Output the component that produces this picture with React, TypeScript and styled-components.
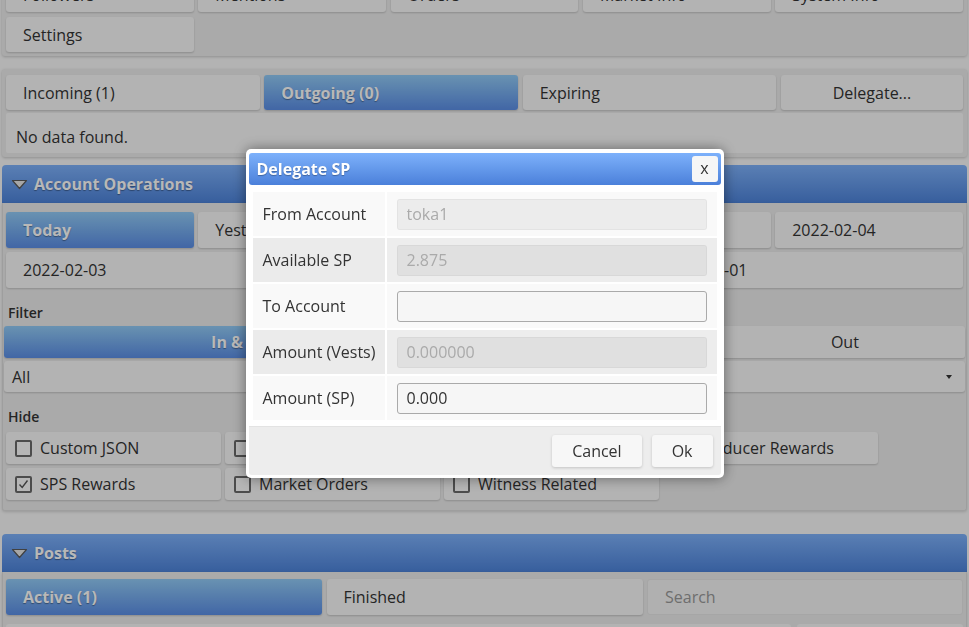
import React from "react";
import styled, { createGlobalStyle, css } from "styled-components";

const GlobalStyle = createGlobalStyle`
  * { box-sizing: border-box; }
  html, body { margin: 0; padding: 0; }
  body {
    background: #f8f8f8;
    font-family: "Open Sans", "Liberation Sans", sans-serif;
    font-size: 16px;
    color: #333;
    overflow: hidden;
  }
`;

/* ---------- page ---------- */

const Page = styled.div`
  margin-top: -27px;
  padding: 0 2px;
  display: flex;
  flex-direction: column;
`;

const Card = styled.section<{ $top?: number; $pad?: string }>`
  margin-top: ${(p) => p.$top ?? 0}px;
  padding: ${(p) => p.$pad ?? "4px"};
  background: #ececec;
  border-radius: 3px;
  box-shadow: 0 1px 3px rgba(0, 0, 0, 0.2);
  display: flex;
  flex-direction: column;
`;

const Grid = styled.div<{ $cols: string; $gap?: string }>`
  display: grid;
  grid-template-columns: ${(p) => p.$cols};
  gap: ${(p) => p.$gap ?? "5px 4.5px"};
`;

const Btn = styled.div<{ $active?: boolean; $center?: boolean; $h?: number }>`
  height: ${(p) => p.$h ?? 35}px;
  display: flex;
  align-items: center;
  justify-content: ${(p) => (p.$center ? "center" : "flex-start")};
  padding: 0 17px;
  background: #f8f8f8;
  border-radius: 3px;
  box-shadow: 0 1px 2px rgba(0, 0, 0, 0.18);
  color: #333;
  white-space: nowrap;
  overflow: hidden;
  ${(p) =>
    p.$active &&
    css`
      background: linear-gradient(#92cbf6, #5b8ee6);
      color: #fff;
      font-weight: 700;
      text-shadow: 0 1px 1px rgba(0, 0, 0, 0.35);
    `}
`;

const EmptyNote = styled.div`
  margin-top: 3px;
  height: 40px;
  padding: 14px 0 0 10px;
  line-height: 20px;
  background: #f9f9f9;
  border-radius: 2px;
`;

const SectionHeader = styled.header<{ $top: number }>`
  margin-top: ${(p) => p.$top}px;
  height: 38px;
  display: flex;
  align-items: center;
  gap: 6px;
  padding-left: 9px;
  border-radius: 4px 4px 0 0;
  background: linear-gradient(#7eb1fa, #4d83da);
  color: #fff;
  font-weight: 700;
  text-shadow: 0 1px 1px rgba(0, 0, 0, 0.35);
`;

const SectionBody = styled.div<{ $pad: string }>`
  padding: ${(p) => p.$pad};
  background: #ececec;
  border: 1px solid #dcdcdc;
  border-top: 0;
  border-radius: 0 0 3px 3px;
  box-shadow: 0 1px 3px rgba(0, 0, 0, 0.15);
  display: flex;
  flex-direction: column;
`;

const FieldLabel = styled.div<{ $top: number }>`
  margin-top: ${(p) => p.$top}px;
  padding-left: 2px;
  font-size: 14px;
  font-weight: 600;
  line-height: 20px;
`;

const Segmented = styled.div`
  margin: 3px -2px 0;
  display: grid;
  grid-template-columns: 2fr 1fr 1fr;
  border-radius: 3px;
  overflow: hidden;
  box-shadow: 0 1px 2px rgba(0, 0, 0, 0.18);
`;

const Segment = styled.div<{ $active?: boolean }>`
  height: 32px;
  display: flex;
  align-items: center;
  justify-content: center;
  background: #f8f8f8;
  ${(p) =>
    p.$active &&
    css`
      background: linear-gradient(#92cbf6, #5b8ee6);
      color: #fff;
      font-weight: 700;
      text-shadow: 0 1px 1px rgba(0, 0, 0, 0.35);
    `}
`;

const SelectBox = styled.div`
  margin: 3px -2px 0;
  height: 31px;
  display: flex;
  align-items: center;
  justify-content: space-between;
  padding: 0 13px 0 8px;
  background: #f8f8f8;
  border-radius: 3px;
  box-shadow: 0 1px 2px rgba(0, 0, 0, 0.18);
`;

const CheckItem = styled.label`
  height: 32px;
  display: flex;
  align-items: center;
  gap: 8px;
  padding-left: 9px;
  background: #f8f8f8;
  border-radius: 3px;
  box-shadow: 0 1px 2px rgba(0, 0, 0, 0.18);
  white-space: nowrap;
  overflow: hidden;
`;

const Box = styled.span`
  width: 17px;
  height: 17px;
  flex: none;
  display: flex;
  align-items: center;
  justify-content: center;
  border: 2px solid #6a6a6a;
  border-radius: 2px;
  background: #fdfdfd;
`;

const SearchField = styled.div`
  height: 36px;
  display: flex;
  align-items: center;
  padding-left: 17px;
  background: #f4f4f4;
  border: 1px solid #e6e6e6;
  border-radius: 3px;
  color: #999;
`;

const PostStub = styled.div`
  height: 30px;
  background: #f8f8f8;
  border-radius: 3px;
`;

/* ---------- dialog ---------- */

const Backdrop = styled.div`
  position: fixed;
  inset: 0;
  background: rgba(0, 0, 0, 0.28);
  display: flex;
  align-items: center;
  justify-content: center;
`;

const Dialog = styled.div`
  width: 478px;
  padding: 4px 3px 3px;
  background: #fff;
  border-radius: 5px;
  box-shadow: 0 0 14px rgba(0, 0, 0, 0.45);
`;

const DialogHead = styled.div`
  height: 32px;
  display: flex;
  align-items: center;
  justify-content: space-between;
  padding: 0 3px 0 8px;
  border-radius: 3px;
  background: linear-gradient(#7db1fb, #4b80da);
`;

const DialogTitle = styled.div`
  color: #fff;
  font-weight: 700;
  text-shadow: 0 1px 1px rgba(0, 0, 0, 0.3);
`;

const CloseBtn = styled.button`
  width: 26px;
  height: 26px;
  padding: 0 0 2px;
  border: 0;
  border-radius: 3px;
  background: #f6f6f6;
  font: 16px "Open Sans", "Liberation Sans", sans-serif;
  color: #333;
`;

const DialogBody = styled.div`
  padding: 5px 2px 4px;
`;

const FormTable = styled.table`
  width: 100%;
  border-spacing: 2px;
`;

const LabelCell = styled.td<{ $alt?: boolean }>`
  width: 132px;
  height: 44px;
  padding: 0 0 0 10px;
  background: ${(p) => (p.$alt ? "#ebebeb" : "#f9f9f9")};
  white-space: nowrap;
`;

const InputCell = styled.td<{ $alt?: boolean }>`
  padding: 0 10px;
  background: ${(p) => (p.$alt ? "#ededed" : "#f9f9f9")};
`;

const Field = styled.input`
  display: block;
  width: 100%;
  height: 31px;
  padding: 0 9px;
  border: 1px solid #aaa;
  border-radius: 3px;
  background: #f6f6f6;
  font: 16px "Open Sans", "Liberation Sans", sans-serif;
  color: #333;
  outline: none;
  &:disabled {
    background: rgba(0, 0, 0, 0.05);
    border-color: rgba(0, 0, 0, 0.04);
    color: #aaa;
  }
`;

const DialogFoot = styled.div`
  display: flex;
  justify-content: flex-end;
  gap: 10px;
  padding: 8px;
  background: #ededed;
  border-top: 1px solid #e3e3e3;
  border-radius: 0 0 3px 3px;
`;

const FootBtn = styled.button`
  height: 32px;
  padding: 0 20px;
  border: 0;
  border-radius: 3px;
  background: #f7f7f7;
  box-shadow: 0 1px 3px rgba(0, 0, 0, 0.18);
  font: 16px "Open Sans", "Liberation Sans", sans-serif;
  color: #333;
`;

/* ---------- drawings ---------- */

const CollapseArrow = () => (
  <svg width="17" height="11" viewBox="0 0 17 11">
    <path
      d="M1.5 1.5 H15.5 L8.5 9.5 Z"
      fill="#e8e8e8"
      stroke="#5a5a5a"
      strokeWidth="1.2"
      strokeLinejoin="round"
    />
  </svg>
);

const Tick = () => (
  <svg width="11" height="11" viewBox="0 0 11 11">
    <path d="M1.5 5.5 L4.2 8.5 L9.5 1.5" fill="none" stroke="#555" strokeWidth="1.4" />
  </svg>
);

const Caret = () => (
  <svg width="6" height="4" viewBox="0 0 6 4">
    <polygon points="0,0 6,0 3,4" fill="#333" />
  </svg>
);

/* ---------- data ---------- */

const menu = ["Followers", "Mentions", "Orders", "Market Info", "System Info", "Settings"];
const days = ["Today", "Yesterday", "2022-02-06", "2022-02-05", "2022-02-04"];
const olderDays = ["2022-02-03", "2022-02-02", "2022-02-01"];
const hideOptions: [string, boolean][] = [
  ["Custom JSON", false],
  ["Curation Rewards", false],
  ["Author Rewards", false],
  ["Producer Rewards", false],
  ["SPS Rewards", true],
  ["Market Orders", false],
  ["Witness Related", false],
];

const formRows: { label: string; value: string; disabled: boolean }[] = [
  { label: "From Account", value: "toka1", disabled: true },
  { label: "Available SP", value: "2.875", disabled: true },
  { label: "To Account", value: "", disabled: false },
  { label: "Amount (Vests)", value: "0.000000", disabled: true },
  { label: "Amount (SP)", value: "0.000", disabled: false },
];

export default function App() {
  return (
    <>
      <GlobalStyle />
      <Page>
        <Card>
          <Grid $cols="repeat(5, 1fr)">
            {menu.map((m) => (
              <Btn key={m}>{m}</Btn>
            ))}
          </Grid>
        </Card>

        <Card $top={13} $pad="6px 4px 4px">
          <Grid $cols="1fr 1fr 1fr 182px">
            <Btn>Incoming (1)</Btn>
            <Btn $active>Outgoing (0)</Btn>
            <Btn>Expiring</Btn>
            <Btn $center>Delegate...</Btn>
          </Grid>
          <EmptyNote>No data found.</EmptyNote>
        </Card>

        <SectionHeader $top={8}>
          <CollapseArrow />
          Account Operations
        </SectionHeader>
        <SectionBody $pad="9px 3px 10px">
          <Grid $cols="repeat(5, 1fr)">
            {days.map((d, i) => (
              <Btn key={d} $h={36} $active={i === 0}>
                {d}
              </Btn>
            ))}
          </Grid>
          <Grid $cols="repeat(3, 1fr)" style={{ marginTop: 4 }}>
            {olderDays.map((d) => (
              <Btn key={d} $h={36}>
                {d}
              </Btn>
            ))}
          </Grid>
          <FieldLabel $top={15}>Filter</FieldLabel>
          <Segmented>
            <Segment $active>In &amp; Out</Segment>
            <Segment>In</Segment>
            <Segment>Out</Segment>
          </Segmented>
          <SelectBox>
            All
            <Caret />
          </SelectBox>
          <FieldLabel $top={15}>Hide</FieldLabel>
          <Grid $cols="repeat(4, 215px)" $gap="4px 4px" style={{ marginTop: 5 }}>
            {hideOptions.map(([label, on]) => (
              <CheckItem key={label}>
                <Box>{on && <Tick />}</Box>
                {label}
              </CheckItem>
            ))}
          </Grid>
        </SectionBody>

        <SectionHeader $top={23}>
          <CollapseArrow />
          Posts
        </SectionHeader>
        <SectionBody $pad="7px 3px 10px">
          <Grid $cols="repeat(3, 1fr)">
            <Btn $h={36} $active>
              Active (1)
            </Btn>
            <Btn $h={36}>Finished</Btn>
            <SearchField>Search</SearchField>
          </Grid>
          <Grid $cols="1fr 166px" $gap="6px" style={{ marginTop: 9 }}>
            <PostStub />
            <PostStub />
          </Grid>
        </SectionBody>
      </Page>

      <Backdrop>
        <Dialog>
          <DialogHead>
            <DialogTitle>Delegate SP</DialogTitle>
            <CloseBtn>x</CloseBtn>
          </DialogHead>
          <DialogBody>
            <FormTable>
              <tbody>
                {formRows.map((r, i) => (
                  <tr key={r.label}>
                    <LabelCell $alt={i % 2 === 1}>{r.label}</LabelCell>
                    <InputCell $alt={i % 2 === 1}>
                      <Field defaultValue={r.value} disabled={r.disabled} />
                    </InputCell>
                  </tr>
                ))}
              </tbody>
            </FormTable>
          </DialogBody>
          <DialogFoot>
            <FootBtn>Cancel</FootBtn>
            <FootBtn>Ok</FootBtn>
          </DialogFoot>
        </Dialog>
      </Backdrop>
    </>
  );
}
